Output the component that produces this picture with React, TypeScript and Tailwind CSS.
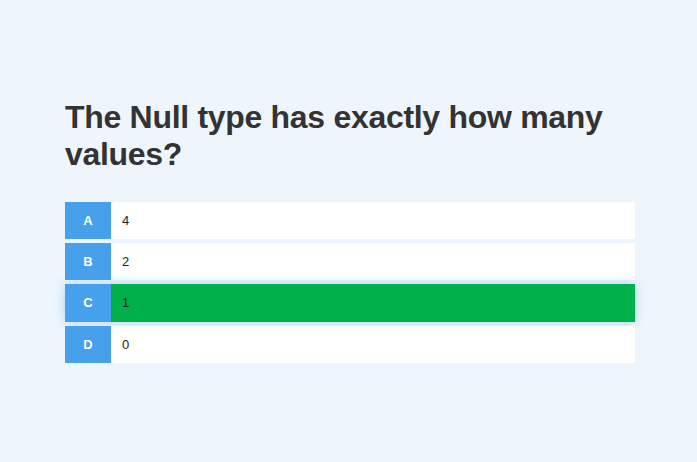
const options = [
  { letter: "A", text: "4" },
  { letter: "B", text: "2" },
  { letter: "C", text: "1", correct: true },
  { letter: "D", text: "0" },
];

export default function App() {
  return (
    <div className="min-h-[462px] w-full bg-[#eff5fc] font-['Liberation_Sans',Arial,sans-serif] text-[#333]">
      <div className="pl-[65px] pr-[62px] pt-[99px]">
        <h1 className="text-[32px] leading-[37px] font-bold text-[#333] tracking-[-0.3px]">
          The Null type has exactly how many values?
        </h1>
        <div className="mt-[29px] flex flex-col gap-[4px]">
          {options.map((o) => (
            <div
              key={o.letter}
              className={
                o.correct
                  ? "flex h-[38px] bg-[#00b04a] shadow-[0_0_10px_rgba(80,170,240,0.45)]"
                  : "flex h-[37px] bg-white"
              }
            >
              <div className="flex w-[46px] items-center justify-center bg-[#46a0ec] text-[13px] font-bold text-white">
                {o.letter}
              </div>
              <div className="flex items-center pl-[11px] text-[13px] text-[#222]">{o.text}</div>
            </div>
          ))}
        </div>
      </div>
    </div>
  );
}
